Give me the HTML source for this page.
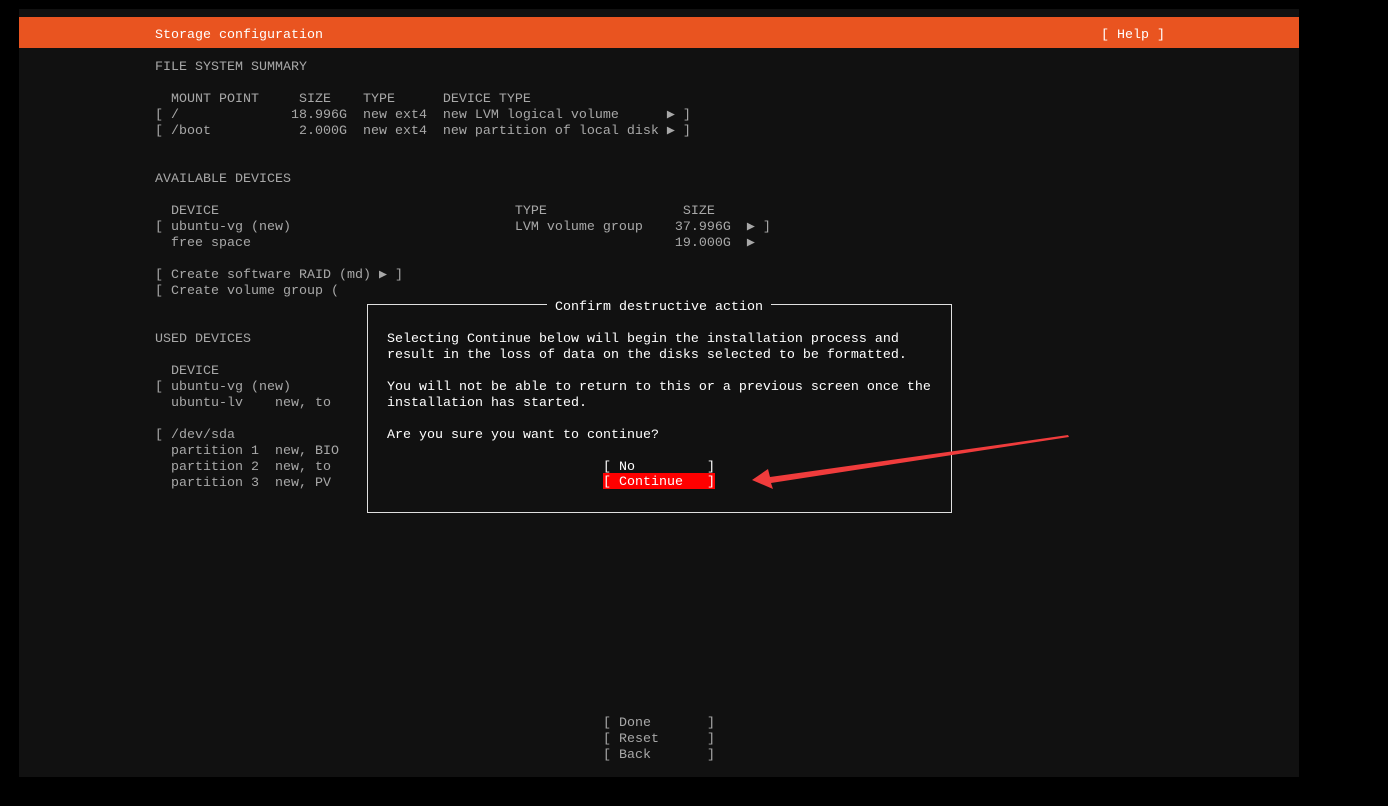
<!DOCTYPE html>
<html><head><meta charset="utf-8"><style>
html,body{margin:0;padding:0;background:#000;width:1388px;height:806px;overflow:hidden}
#t{position:absolute;left:19px;top:9px;width:1280px;height:768px;background:#111}
#bar{position:absolute;left:19px;top:17px;width:1280px;height:31px;background:#e95420}
.l{position:absolute;font-family:"Liberation Mono",monospace;font-size:13.33px;line-height:16px;height:16px;white-space:pre;color:#a8a8a8;transform:translateY(3px)}
.w{color:#fff}
.tri{font-size:9px;vertical-align:1px}
#dlg{position:absolute;left:367px;top:304px;width:583px;height:207px;border:1px solid #e0e0e0;background:#111}
</style></head><body>
<div id="t"></div><div id="bar"></div>
<div class="l w" style="left:155px;top:25px">Storage configuration</div>
<div class="l w" style="left:1101px;top:25px">[ Help ]</div>
<div class="l" style="left:155px;top:57px">FILE SYSTEM SUMMARY</div>
<div class="l" style="left:155px;top:89px">  MOUNT POINT     SIZE    TYPE      DEVICE TYPE</div>
<div class="l" style="left:155px;top:105px">[ /              18.996G  new ext4  new LVM logical volume      ▶ ]</div>
<div class="l" style="left:155px;top:121px">[ /boot           2.000G  new ext4  new partition of local disk ▶ ]</div>
<div class="l" style="left:155px;top:169px">AVAILABLE DEVICES</div>
<div class="l" style="left:155px;top:201px">  DEVICE                                     TYPE                 SIZE</div>
<div class="l" style="left:155px;top:217px">[ ubuntu-vg (new)                            LVM volume group    37.996G  ▶ ]</div>
<div class="l" style="left:155px;top:233px">  free space                                                     19.000G  ▶</div>
<div class="l" style="left:155px;top:265px">[ Create software RAID (md) ▶ ]</div>
<div class="l" style="left:155px;top:281px">[ Create volume group (</div>
<div class="l" style="left:155px;top:329px">USED DEVICES</div>
<div class="l" style="left:155px;top:361px">  DEVICE</div>
<div class="l" style="left:155px;top:377px">[ ubuntu-vg (new)</div>
<div class="l" style="left:155px;top:393px">  ubuntu-lv    new, to</div>
<div class="l" style="left:155px;top:425px">[ /dev/sda</div>
<div class="l" style="left:155px;top:441px">  partition 1  new, BIO</div>
<div class="l" style="left:155px;top:457px">  partition 2  new, to</div>
<div class="l" style="left:155px;top:473px">  partition 3  new, PV</div>
<div class="l" style="left:603px;top:713px">[ Done       ]</div>
<div class="l" style="left:603px;top:729px">[ Reset      ]</div>
<div class="l" style="left:603px;top:745px">[ Back       ]</div>
<div id="dlg"></div>
<div class="l w" style="left:547px;top:297px;background:#111"> Confirm destructive action </div>
<div class="l w" style="left:387px;top:329px">Selecting Continue below will begin the installation process and</div>
<div class="l w" style="left:387px;top:345px">result in the loss of data on the disks selected to be formatted.</div>
<div class="l w" style="left:387px;top:377px">You will not be able to return to this or a previous screen once the</div>
<div class="l w" style="left:387px;top:393px">installation has started.</div>
<div class="l w" style="left:387px;top:425px">Are you sure you want to continue?</div>
<div class="l w" style="left:603px;top:457px">[ No         ]</div>
<div style="position:absolute;left:603px;top:473px;width:112px;height:16px;background:#f00"></div>
<div class="l w" style="left:603px;top:473px;transform:translateY(2px)">[ Continue   ]</div>
<svg style="position:absolute;left:0;top:0" width="1388" height="806">
<polygon points="1068,435 1069,437 771,483 773,489 752,480 768,469 770,477" fill="#f03c3c"/>
</svg>
</body></html>
